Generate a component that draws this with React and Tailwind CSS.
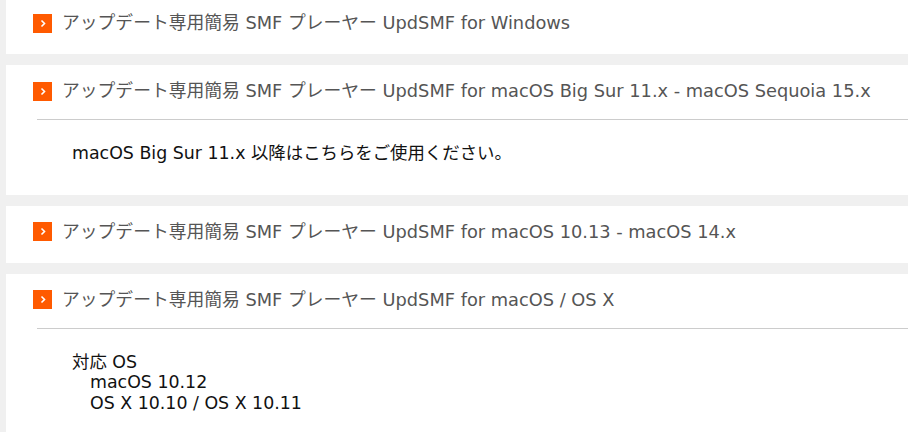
const FONT = "font-['DejaVu_Sans','Noto_Sans_CJK_JP',sans-serif]"

function Marker() {
  return (
    <span className="flex h-[19px] w-[19px] shrink-0 items-center justify-center bg-[#ff5a00]">
      <svg width="8" height="9" viewBox="0 0 8 9" fill="none">
        <polyline points="2.5,1.5 5.5,4.5 2.5,7.5" stroke="#fff" strokeWidth="1.6" />
      </svg>
    </span>
  )
}

function Card({ title, first, children }) {
  return (
    <div className={`ml-[6px] mb-[11px] bg-white ${first ? 'pt-[11px]' : 'pt-[14px]'} ${children ? '' : 'pb-[19px]'}`}>
      <div className="flex h-[24px] items-center gap-[10px] pl-[27px]">
        <Marker />
        <span className="whitespace-nowrap text-[17.8px] leading-[24px] text-[#555]">{title}</span>
      </div>
      {children && (
        <>
          <div className="ml-[31px] mt-[16px] border-t border-[#cccccc]"></div>
          <div className="pl-[66px] pt-[23px] pb-[31px] text-[17.4px] leading-[20.5px] text-[#111]">
            {children}
          </div>
        </>
      )}
    </div>
  )
}

export default function App() {
  return (
    <div className={`h-[432px] overflow-hidden bg-[#f0f0f0] ${FONT}`}>
      <Card first title="アップデート専用簡易 SMF プレーヤー UpdSMF for Windows" />
      <Card title="アップデート専用簡易 SMF プレーヤー UpdSMF for macOS Big Sur 11.x - macOS Sequoia 15.x">
        <p>macOS Big Sur 11.x 以降はこちらをご使用ください。</p>
      </Card>
      <Card title="アップデート専用簡易 SMF プレーヤー UpdSMF for macOS 10.13 - macOS 14.x" />
      <Card title="アップデート専用簡易 SMF プレーヤー UpdSMF for macOS / OS X">
        <p>対応 OS</p>
        <p className="pl-[18px]">macOS 10.12</p>
        <p className="pl-[18px]">OS X 10.10 / OS X 10.11</p>
        <p>&nbsp;</p>
      </Card>
    </div>
  )
}
